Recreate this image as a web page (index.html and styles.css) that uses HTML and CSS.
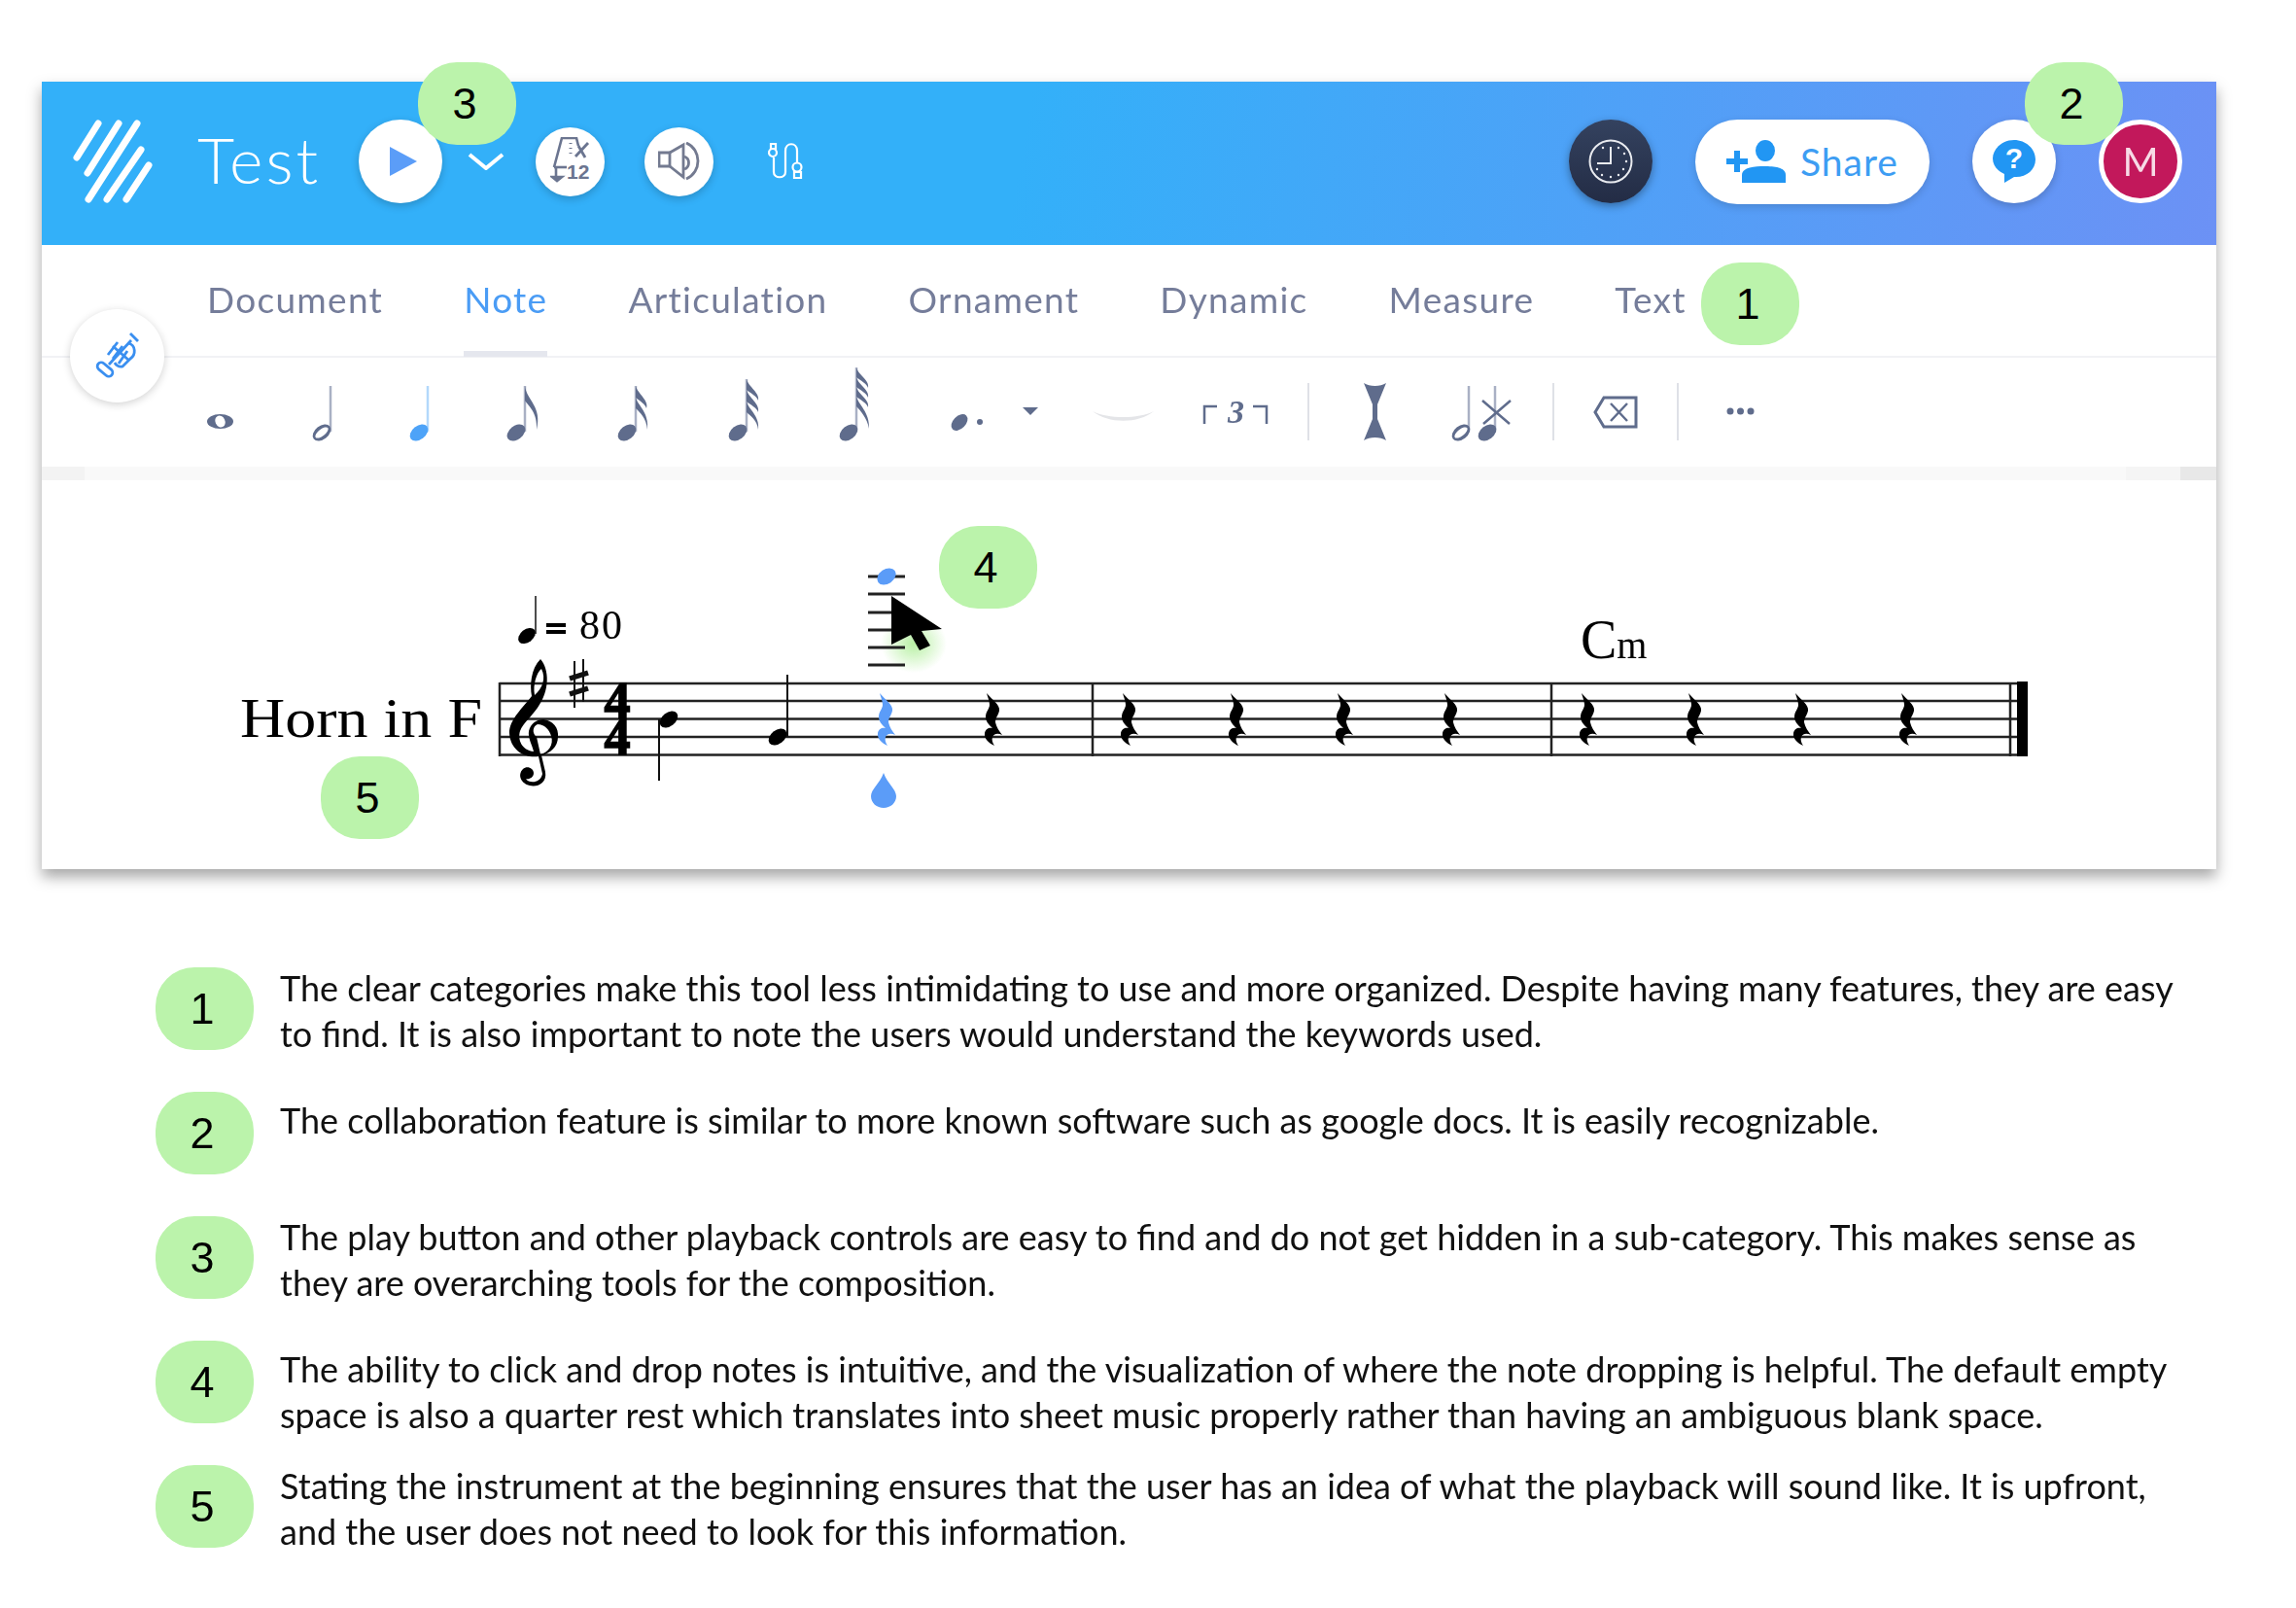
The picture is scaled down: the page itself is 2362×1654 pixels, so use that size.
FILE: index.html
```html
<!DOCTYPE html>
<html lang="en">
<head>
    <meta charset="UTF-8">
    <title>Flat editor notes</title>
    <link rel="stylesheet" href="styles.css">
</head>
<body>
    <svg class="defs" width="0" height="0">
        <defs>
            <ellipse id="head" cx="0" cy="0" rx="10.5" ry="7" transform="rotate(-38)"/>
            <path id="rest" d="M-6 -27 C0 -20 8 -15 7 -9 C6 -4 3 -2 3 3 C4 8 7 12 10 16 C6 14 2 14 0 18 C-1 21 0 24 2 27 C-3 25 -9 20 -8 14 C-7 9 -3 8 0 9 C-4 5 -7 2 -7 -3 C-7 -8 -3 -11 -3 -15 C-3 -19 -5 -23 -6 -27 Z"/>
        </defs>
    </svg>

    <div class="card">
        <header class="topbar">
            <div class="bar-left">
                <svg class="logo" viewBox="75 123 82 86" width="82" height="86">
                    <g stroke="#fff" stroke-width="7" stroke-linecap="round">
                        <path d="M101 127 L79 162"/>
                        <path d="M122 127 L90 178"/>
                        <path d="M141 127 L91 205"/>
                        <path d="M145 154 L110 205"/>
                        <path d="M153 170 L130 205"/>
                    </g>
                </svg>
                <span class="doc-title">Test</span>
                <span class="round play">
                    <svg viewBox="0 0 28 30" width="28" height="30"><path d="M0 0 L28 15 L0 30 Z" fill="#5b9df8"/></svg>
                </span>
                <svg class="chevron" viewBox="0 0 38 18" width="38" height="18"><path d="M2 2 L19 16 L36 2" fill="none" stroke="#fff" stroke-width="4"/></svg>
                <span class="round small">
                    <svg viewBox="0 0 42 50" width="42" height="50" fill="none" stroke="#6b7590" stroke-width="2.600">
                        <path d="M4 31 L12 1 L27 1 L29 9"/>
                        <path d="M4 31 L17 31"/>
                        <path d="M6 31 L6 41"/>
                        <path d="M2 41 L12 41 L7 45 Z" fill="#6b7590"/>
                        <path d="M21 6 V7 M21 11 V12 M21 16 V17" stroke-width="3"/>
                        <path d="M26 20 L39 6 M29 9 L36 21" stroke-width="2.800"/>
                        <text x="17" y="43" class="tempo-num">12</text>
                    </svg>
                </span>
                <span class="round small speaker">
                    <svg viewBox="0 0 44 40" width="44" height="40" fill="none" stroke="#737a90" stroke-width="2.800">
                        <path d="M1 11 L12 11 L12 25 L1 25 Z"/>
                        <path d="M12 11 L26 3 L26 36 L12 25"/>
                        <path d="M27 15 C33 17 33 26 27 28"/>
                        <path d="M29 1 C45 8 45 31 29 38"/>
                    </svg>
                </span>
                <svg class="mixer" viewBox="0 0 38 38" width="38" height="38" fill="none" stroke="#fff" stroke-width="2.200">
                    <path d="M3 1 H8 V6 H3 Z"/>
                    <circle cx="5" cy="10" r="4"/>
                    <path d="M6 15 V30 C6 37 18 37 18 30 V8 C18 -1 30 -1 30 8 V20"/>
                    <circle cx="30" cy="25" r="4.500"/>
                    <path d="M27 30 H34 V36 H27 Z"/>
                </svg>
            </div>
            <div class="bar-right">
                <span class="round clock">
                    <svg viewBox="0 0 46 46" width="46" height="46" fill="none" stroke="#e9ebf0">
                        <circle cx="23" cy="23" r="21.500" stroke-width="2"/>
                        <path d="M23 8 L23 25 L9 25" stroke-width="2"/>
                        <g fill="#e9ebf0" stroke="none">
                            <circle cx="31" cy="9" r="1.200"/><circle cx="37" cy="15" r="1.200"/>
                            <circle cx="39" cy="23" r="1.200"/><circle cx="36" cy="31" r="1.200"/>
                            <circle cx="31" cy="37" r="1.200"/><circle cx="23" cy="39" r="1.200"/>
                            <circle cx="14" cy="37" r="1.200"/><circle cx="9" cy="31" r="1.200"/>
                            <circle cx="15" cy="9" r="1.200"/>
                        </g>
                    </svg>
                </span>
                <span class="share">
                    <svg viewBox="0 0 62 44" width="62" height="44" fill="#2196f3">
                        <path d="M0 19 H22 V25 H0 Z M8 11 H14 V33 H8 Z"/>
                        <ellipse cx="40" cy="11" rx="10" ry="11"/>
                        <path d="M16 44 V36 C16 28 30 27 39 27 C49 27 61 28 61 36 V44 Z"/>
                    </svg>
                    Share
                </span>
                <span class="round help">
                    <svg viewBox="0 0 44 44" width="44" height="44">
                        <path d="M22 0 C34 0 44 9 44 20 C44 31 34 39 22 38 L12 44 L12 35 C5 32 0 26 0 19 C0 9 10 0 22 0 Z" fill="#2196f3"/>
                        <text x="22" y="29" class="help-q">?</text>
                    </svg>
                </span>
                <span class="avatar">M</span>
            </div>
        </header>

        <nav class="tabs">
            <a>Document</a>
            <a class="active">Note</a>
            <a>Articulation</a>
            <a>Ornament</a>
            <a>Dynamic</a>
            <a>Measure</a>
            <a>Text</a>
        </nav>

        <div class="toolbar">
            <svg viewBox="200 368 90 112" width="90" height="112" class="ink">
                <ellipse cx="226.500" cy="433.500" rx="13.500" ry="7.500"/>
                <ellipse cx="226.500" cy="433.500" rx="5" ry="6.200" fill="#fff" transform="rotate(-25 226.500 433.500)"/>
            </svg>
            <svg viewBox="290 368 110 112" width="110" height="112" class="ink">
                <path d="M340 397 V444" class="stem"/>
                <ellipse cx="331" cy="445" rx="10.500" ry="7" transform="rotate(-38 331 445)"/>
                <ellipse cx="331" cy="445" rx="8" ry="3.400" fill="#fff" transform="rotate(-38 331 445)"/>
            </svg>
            <svg viewBox="400 368 100 112" width="100" height="112">
                <path d="M440 397 V444" stroke="#b3d8fb" stroke-width="2.500"/>
                <use href="#head" x="431" y="445" fill="#4da3f8"/>
            </svg>
            <svg viewBox="500 368 110 112" width="110" height="112" class="ink">
                <path d="M540 397 V444" class="stem"/>
                <use href="#head" x="531" y="445"/>
                <path d="M540 397 C542 412 558 418 552 442 C553 424 544 418 540 412 Z"/>
            </svg>
            <svg viewBox="610 368 115 112" width="115" height="112" class="ink">
                <path d="M654 397 V444" class="stem"/>
                <use href="#head" x="645" y="445"/>
                <path d="M654 397 C656 405 668 412 665 420 C664 416 658 412 654 409 Z"/>
                <path d="M654 409 C656 417 668 424 666 442 C665 430 658 424 654 420 Z"/>
            </svg>
            <svg viewBox="725 368 115 112" width="115" height="112" class="ink">
                <path d="M768 390 V444" class="stem"/>
                <use href="#head" x="759" y="445"/>
                <path d="M768 390 C770 398 782 404 780 412 C779 408 772 404 768 401 Z"/>
                <path d="M768 401 C770 409 782 415 780 424 C779 420 772 416 768 413 Z"/>
                <path d="M768 413 C770 421 782 428 780 442 C779 432 772 428 768 424 Z"/>
            </svg>
            <svg viewBox="840 368 120 112" width="120" height="112" class="ink">
                <path d="M881 378 V444" class="stem"/>
                <use href="#head" x="873" y="445"/>
                <path d="M881 378 C883 386 895 391 893 399 C892 395 885 391 881 388 Z"/>
                <path d="M881 388 C883 396 895 401 893 409 C892 405 885 401 881 398 Z"/>
                <path d="M881 398 C883 406 895 411 893 419 C892 415 885 411 881 408 Z"/>
                <path d="M881 408 C883 416 895 424 894 441 C892 430 885 422 881 418 Z"/>
            </svg>
            <svg viewBox="960 368 120 112" width="120" height="112" class="ink">
                <ellipse cx="987" cy="434.500" rx="10" ry="6.500" transform="rotate(-45 987 434.500)"/>
                <circle cx="1008" cy="434" r="3"/>
                <path d="M1052 419 H1068 L1060 427 Z"/>
            </svg>
            <svg viewBox="1080 368 140 112" width="140" height="112">
                <path d="M1124 423 C1140 436 1171 436 1187 423 C1171 431 1140 431 1124 423 Z" fill="#e4e5e8"/>
            </svg>
            <svg viewBox="1220 368 100 112" width="100" height="112" fill="none" stroke="#5f6c8c" stroke-width="2.500">
                <path d="M1239 436 V418 H1252"/>
                <path d="M1289 418 H1303 V436"/>
                <text x="1263" y="435" class="tuplet">3</text>
            </svg>
            <i class="sep sep-a"></i>
            <svg viewBox="1390 368 90 112" width="90" height="112" class="ink">
                <path d="M1403 394 C1409 398 1420 398 1426 394 L1417 416 V431 L1426 453 C1420 449 1409 449 1403 453 L1412 431 V416 Z"/>
            </svg>
            <svg viewBox="1480 368 100 112" width="100" height="112" class="ink">
                <path d="M1511 397 V444" class="stem"/>
                <ellipse cx="1503" cy="445" rx="10.500" ry="7" transform="rotate(-38 1503 445)"/>
                <ellipse cx="1503" cy="445" rx="8" ry="3.400" fill="#fff" transform="rotate(-38 1503 445)"/>
                <path d="M1538 397 V444" class="stem"/>
                <use href="#head" x="1530" y="445"/>
                <path d="M1525 412 L1553 436 M1554 412 L1526 436" stroke="#5f6c8c" stroke-width="2.500"/>
            </svg>
            <i class="sep sep-b"></i>
            <svg viewBox="1620 368 85 112" width="85" height="112" fill="none" stroke="#5f6c8c" stroke-width="3">
                <path d="M1651 409 H1684 V439 H1651 L1642 424 Z"/>
                <path d="M1658 415 L1675 433 M1675 415 L1658 433" stroke-width="2.500"/>
            </svg>
            <i class="sep sep-c"></i>
            <svg viewBox="1760 368 60 112" width="60" height="112" class="ink">
                <circle cx="1780" cy="423" r="3.500"/><circle cx="1790.500" cy="423" r="3.500"/><circle cx="1801" cy="423" r="3.500"/>
            </svg>
        </div>

        <div class="strip"></div>

        <div class="score">
            <svg viewBox="43 494 2237 400" width="2237" height="400">
                <defs>
                    <radialGradient id="glow"><stop offset="0" stop-color="#b8f0a4"/><stop offset="1" stop-color="#b8f0a4" stop-opacity="0"/></radialGradient>
                </defs>

                <!-- staff -->
                <g stroke="#222" stroke-width="2.500">
                    <path d="M514 703 H2085 M514 721 H2085 M514 739.500 H2085 M514 758 H2085 M514 776.500 H2085"/>
                    <path d="M514 702 V778 M1124 702 V778 M1596 702 V778 M2068 702 V778"/>
                </g>
                <rect x="2075" y="701" width="11" height="77"/>

                <text x="247" y="758" textLength="249" lengthAdjust="spacingAndGlyphs" class="serif instrument">Horn in F</text>

                <!-- clef, key, time -->
                <path fill-rule="evenodd" d="M556 678 C565 688 566 710 553 728 C546 738 538 744 535 752 C532 762 538 772 549 773 C547 765 543 759 544 752 C546 744 552 740 559 740 C569 741 575 749 574 758 C574 768 566 775 557 777 L561 794 C563 806 552 810 545 808 C536 806 532 797 538 791 C542 787 549 790 549 795 C549 800 544 802 541 801 C544 806 556 806 558 796 L554 778 C540 780 525 772 524 754 C524 740 538 728 547 716 C545 705 546 688 556 678 Z M550 715 C558 708 562 698 557 688 C552 692 548 704 550 715 Z M553 745 C548 747 547 754 552 758 L556 776 C564 774 570 766 567 757 C565 750 560 745 553 745 Z"/>
                <path stroke="#111" stroke-width="2" d="M591 680 V728 M600 678 V722"/>
                <path stroke="#111" stroke-width="5.500" d="M586 698 L605 692 M586 714 L605 708"/>
                <text class="serif timesig"><tspan x="635" y="739">4</tspan><tspan x="635" y="776">4</tspan></text>

                <!-- tempo -->
                <path stroke="#111" stroke-width="1.500" d="M551 613 V652"/>
                <use href="#head" transform="translate(542 654) scale(.95)"/>
                <rect x="562" y="641" width="20" height="4"/><rect x="562" y="648" width="20" height="4"/>
                <text x="596" y="657" textLength="44" class="serif tempo">80</text>

                <!-- first measure -->
                <path stroke="#111" stroke-width="2" d="M678 740 V803"/>
                <use href="#head" x="688" y="740"/>
                <path stroke="#111" stroke-width="2" d="M810 694 V758"/>
                <use href="#head" x="800" y="758"/>
                <use href="#rest" x="911" y="740" fill="#5b9cf8"/>
                <use href="#rest" x="1021" y="740"/>

                <!-- hover guide -->
                <ellipse cx="940" cy="662" rx="34" ry="30" fill="url(#glow)"/>
                <g stroke="#222" stroke-width="3">
                    <path d="M893 593 H931 M893 611 H931 M893 630 H931 M893 648 H931 M893 666 H931 M893 684 H931"/>
                </g>
                <ellipse cx="912" cy="593" rx="10.500" ry="7.500" fill="#5b9cf8" transform="rotate(-35 912 593)"/>
                <path d="M917 613 L969 647 L948 649 L957 664 L946 669 L937 653 L917 663 Z"/>
                <path d="M909 795 C913 806 922 812 922 819 C922 826 916 831 909 831 C902 831 896 826 896 819 C896 812 905 806 909 795 Z" fill="#5b9cf8"/>

                <!-- other measures -->
                <use href="#rest" x="1161" y="740"/><use href="#rest" x="1272" y="740"/>
                <use href="#rest" x="1382" y="740"/><use href="#rest" x="1492" y="740"/>
                <use href="#rest" x="1633" y="740"/><use href="#rest" x="1743" y="740"/>
                <use href="#rest" x="1853" y="740"/><use href="#rest" x="1962" y="740"/>

                <text x="1626" y="677" class="serif chord">C<tspan class="chord-sub">m</tspan></text>
            </svg>

            <span class="badge" id="badge4">4</span>
            <span class="badge" id="badge5">5</span>
        </div>

        <span class="badge" id="badge1">1</span>
        <span class="badge" id="badge2">2</span>
        <span class="badge" id="badge3">3</span>
        <span class="trumpet">
            <svg viewBox="0 0 46 50" width="46" height="50" fill="none" stroke="#3a8ff0" stroke-width="2.800">
                <rect x="1" y="35" width="18" height="8" rx="4" transform="rotate(40 10 39)"/>
                <path d="M14 34 L37 9"/>
                <path d="M36 2 L44 10"/>
                <path d="M34 12 C42 14 42 24 36 28 L28 36 C24 37 21 34 20 32"/>
                <path d="M23 11 L13 24 M28 15 L18 28 M33 20 L24 33"/>
                <path d="M18 15 L34 29"/>
            </svg>
        </span>
    </div>

    <section class="notes">
        <div class="note">
            <span class="num">1</span>
            <p>The clear categories make this tool less intimidating to use and more organized. Despite having many features, they are easy<br>to find. It is also important to note the users would understand the keywords used.</p>
        </div>
        <div class="note low">
            <span class="num">2</span>
            <p>The collaboration feature is similar to more known software such as google docs. It is easily recognizable.</p>
        </div>
        <div class="note">
            <span class="num">3</span>
            <p>The play button and other playback controls are easy to find and do not get hidden in a sub-category. This makes sense as<br>they are overarching tools for the composition.</p>
        </div>
        <div class="note low">
            <span class="num">4</span>
            <p>The ability to click and drop notes is intuitive, and the visualization of where the note dropping is helpful. The default empty<br>space is also a quarter rest which translates into sheet music properly rather than having an ambiguous blank space.</p>
        </div>
        <div class="note">
            <span class="num">5</span>
            <p>Stating the instrument at the beginning ensures that the user has an idea of what the playback will sound like. It is upfront,<br>and the user does not need to look for this information.</p>
        </div>
    </section>
</body>
</html>
```

FILE: styles.css
```css
body {
    margin: 0;
    background-color: #fff;
    font-family: Lato, Arial, sans-serif;
    color: #000;
}

.defs {
    position: absolute;
}

.card {
    position: relative;
    width: 2237px;
    margin: 84px 0 0 43px;
    background-color: #fff;
    box-shadow: 0 8px 14px rgba(0, 0, 0, 0.35);
    filter: blur(0.4px);
}

.topbar {
    display: flex;
    justify-content: space-between;
    align-items: center;
    height: 168px;
    padding: 0 35px 4px 32px;
    box-sizing: border-box;
    background: linear-gradient(100deg, #33b0f9 45%, #6c91f5 100%);
}

.bar-left,
.bar-right {
    display: flex;
    align-items: center;
}

.doc-title {
    margin-left: 46px;
    margin-right: 43px;
    margin-bottom: 6px;
    font-size: 66px;
    font-weight: 300;
    letter-spacing: 3px;
    color: #fff;
    width: 123px;
}

.round {
    display: flex;
    align-items: center;
    justify-content: center;
    width: 86px;
    height: 86px;
    border-radius: 50%;
    background-color: #fff;
    box-shadow: 0 3px 8px rgba(0, 0, 0, 0.2);
}

.play svg {
    margin-left: 6px;
}

.chevron {
    margin-left: 26px;
    margin-right: 32px;
}

.round.small {
    width: 71px;
    height: 71px;
}

.speaker {
    margin-left: 41px;
}

.mixer {
    margin-left: 56px;
}

.tempo-num {
    font-family: "Liberation Sans", Arial, sans-serif;
    font-size: 21px;
    font-weight: 700;
    fill: #6b7590;
    stroke: none;
}

.clock {
    background: linear-gradient(#34425f, #232c45);
    box-shadow: 0 3px 8px rgba(0, 0, 0, 0.35);
}

.share {
    display: flex;
    align-items: center;
    gap: 14px;
    box-sizing: border-box;
    width: 241px;
    height: 87px;
    margin-left: 44px;
    padding-left: 32px;
    border-radius: 44px;
    background-color: #fff;
    font-size: 39px;
    letter-spacing: 1px;
    color: #3d9df3;
    box-shadow: 0 3px 8px rgba(0, 0, 0, 0.15);
}

.help {
    margin-left: 44px;
}

.help-q {
    font-family: "Liberation Sans", Arial, sans-serif;
    font-size: 30px;
    font-weight: 700;
    fill: #fff;
    text-anchor: middle;
}

.avatar {
    display: flex;
    align-items: center;
    justify-content: center;
    box-sizing: border-box;
    width: 86px;
    height: 86px;
    margin-left: 44px;
    border: 5px solid #fff;
    border-radius: 50%;
    background-color: #c2185b;
    font-size: 40px;
    color: #f7dbe6;
}

.tabs {
    display: flex;
    gap: 83px;
    height: 116px;
    padding: 31px 0 0 170px;
    box-sizing: border-box;
    border-bottom: 2px solid #f1f2f5;
    font-size: 37px;
    color: #757d9a;
}

.tabs a {
    height: 84px;
    letter-spacing: 1.3px;
    line-height: 50px;
    box-sizing: border-box;
}

.tabs a.active {
    color: #4a9cf5;
    border-bottom: 6px solid #e5e7ee;
}

.toolbar {
    display: flex;
    height: 112px;
    padding-left: 157px;
}

.ink {
    fill: #5f6c8c;
}

.stem {
    stroke: #a9b0c4;
    stroke-width: 2.5;
    fill: none;
}

.tuplet {
    font-family: "Liberation Serif", serif;
    font-size: 34px;
    font-style: italic;
    font-weight: 700;
    fill: #5f6c8c;
    stroke: none;
}

.sep {
    align-self: flex-start;
    width: 2px;
    height: 59px;
    margin-top: 26px;
    background-color: #dfe1e7;
}

.sep-a {
    margin-left: 25px;
    margin-right: 43px;
}

.sep-b {
    margin-left: 17px;
    margin-right: 20px;
}

.sep-c {
    margin-left: 21px;
    margin-right: 33px;
}

.strip {
    height: 14px;
    background: linear-gradient(to right, #f3f3f3 0 44px, #f9f9f9 44px 2144px, #f5f5f5 2144px 2200px, #e8e8e8 2200px);
}

.score {
    position: relative;
    height: 400px;
}

.score svg {
    display: block;
}

.serif {
    font-family: "Liberation Serif", serif;
}

.instrument {
    font-size: 58px;
}

.timesig {
    font-size: 54px;
    font-weight: 700;
    text-anchor: middle;
    stroke: #000;
    stroke-width: 1.5;
}

.tempo {
    font-size: 42px;
}

.chord {
    font-size: 56px;
}

.chord-sub {
    font-size: 40px;
}

.badge,
.num {
    display: flex;
    align-items: center;
    justify-content: center;
    flex-shrink: 0;
    box-sizing: border-box;
    width: 101px;
    height: 85px;
    padding-right: 5px;
    border-radius: 40px;
    background-color: #bbf3ab;
    font-family: "Liberation Sans", Arial, sans-serif;
    font-size: 45px;
    color: #000;
}

.badge {
    position: absolute;
}

#badge1 { left: 1707px; top: 186px; }
#badge2 { left: 2040px; top: -20px; }
#badge3 { left: 387px; top: -20px; }
#badge4 { left: 923px; top: 47px; }
#badge5 { left: 287px; top: 284px; }

.trumpet {
    position: absolute;
    left: 29px;
    top: 234px;
    display: flex;
    align-items: center;
    justify-content: center;
    width: 97px;
    height: 96px;
    border-radius: 50%;
    background-color: #fff;
    box-shadow: 0 2px 8px rgba(0, 0, 0, 0.18);
}

.notes {
    display: grid;
    grid-auto-rows: 128px;
    margin: 101px 0 0 160px;
    filter: blur(0.3px);
}

.note {
    display: flex;
    gap: 27px;
}

.note p {
    margin: -2px 0 0;
    font-size: 36px;
    line-height: 46.5px;
    color: #111;
    white-space: nowrap;
}

.note.low p {
    padding-top: 8px;
}
```
